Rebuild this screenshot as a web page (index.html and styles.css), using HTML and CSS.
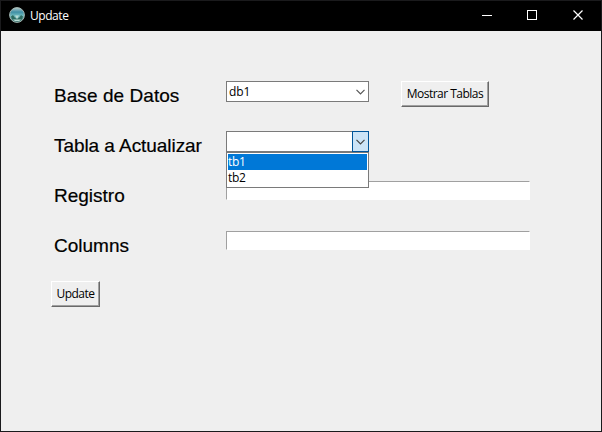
FILE: index.html
```html
<!DOCTYPE html>
<html lang="es">
<head>
<meta charset="utf-8">
<title>Update</title>
<link rel="stylesheet" href="styles.css">
</head>
<body>
<div class="window">
  <header class="titlebar">
    <svg class="logo" width="16" height="16" viewBox="0 0 16 16">
      <defs><linearGradient id="sky" x1="0" y1="0" x2="0" y2="1"><stop offset="0" stop-color="#b5c9c8"/><stop offset=".3" stop-color="#3f8fa5"/><stop offset=".55" stop-color="#6fb9bd"/><stop offset="1" stop-color="#2d6560"/></linearGradient></defs>
      <circle cx="8" cy="8" r="7.4" fill="url(#sky)" stroke="#a3b5b0" stroke-width="1"/>
      <path d="M2 9.500l2-1.500 2 3 2 1 2-1 2-3 2 1.500-1 2.500-2 1H5l-2-1z" fill="#2c6a5e"/>
      <path d="M6 8.500h4l-1 2-1 1.500-1-1.500zM4 12.500h8l-2 1.500H6z" fill="#b9ddd5"/>
    </svg>
    <span class="title">Update</span>
    <div class="controls">
      <svg width="46" height="30" viewBox="0 0 46 30"><path d="M19 14.500h10" stroke="#fff"/></svg>
      <svg width="46" height="30" viewBox="0 0 46 30"><rect x="18.500" y="9.500" width="9" height="9" fill="none" stroke="#fff"/></svg>
      <svg width="46" height="30" viewBox="0 0 46 30"><path d="M18.500 9.500l9 9m0-9l-9 9" stroke="#fff" stroke-width="1.200"/></svg>
    </div>
  </header>
  <main class="form">
    <div class="row">
      <label class="label base">Base de Datos</label>
      <div class="combo"><span class="value">db1</span><span class="arrow"><svg width="9" height="6" viewBox="0 0 9 6"><path d="M.5.800l4 4 4-4" fill="none" stroke="#555" stroke-width="1.200"/></svg></span></div>
      <button class="button show">Mostrar Tablas</button>
    </div>
    <div class="row">
      <label class="label tabla">Tabla a Actualizar</label>
      <div class="combo">
        <span class="value"></span><span class="arrow active"><svg width="9" height="6" viewBox="0 0 9 6"><path d="M.5.800l4 4 4-4" fill="none" stroke="#444" stroke-width="1.200"/></svg></span>
        <div class="menu"><div class="option selected">tb1</div><div class="option">tb2</div></div>
      </div>
    </div>
    <div class="row"><label class="label">Registro</label><div class="entry"></div></div>
    <div class="row"><label class="label">Columns</label><div class="entry"></div></div>
    <button class="button update">Update</button>
  </main>
</div>
</body>
</html>
```
FILE: styles.css
```css
* { box-sizing: border-box; }
body { margin: 0; font: 12px/16px "Open Sans", "Noto Sans", sans-serif; color: #000; }
.window { width: 602px; height: 432px; border: 1px solid #1a1a1c; background: #efefef; overflow: hidden; }
.titlebar { display: flex; height: 30px; background: #000; color: #fff; padding-left: 8px; }
.logo { margin-top: 6px; }
.title { margin: 7px 0 0 5px; letter-spacing: -.45px; }
.controls { display: flex; margin-left: auto; }
.controls svg { display: block; }
.form { padding: 50px 0 0 50px; }
.row { display: flex; align-items: flex-start; height: 50px; }
.label { width: 175px; padding: 4px 0 0 3px; font: 19px/22px "Liberation Sans", Arial, sans-serif; white-space: nowrap; -webkit-text-stroke: .2px #000; }
.base { letter-spacing: .06px; }
.tabla { letter-spacing: -.06px; }
.combo { position: relative; display: flex; width: 143px; height: 21px; border: 1px solid #7a7a7a; background: #fff; }
.value { flex: 1; padding: 2px 0 0 2px; letter-spacing: -.1px; }
.arrow { display: flex; align-items: center; justify-content: center; width: 17px; margin: -1px; height: 21px; }
.arrow.active { background: #cce4f7; border: 1px solid #005499; }
.menu { position: absolute; z-index: 1; left: -1px; top: 20px; width: 143px; height: 36px; padding: 1px 1px 0; border: 1px solid #7a7a7a; background: #fff; }
.option { height: 16px; line-height: 16px; letter-spacing: -.3px; }
.option.selected { background: #0078d7; color: #fff; }
.entry { width: 304px; height: 19px; border: 1px solid #fff; border-top-color: #a0a0a0; border-left-color: #a0a0a0; background: #fff; }
.button { display: flex; align-items: center; justify-content: center; height: 26px; padding: 0; border: 1px solid; border-color: #fff #696969 #696969 #fff; background: #efefef; color: #000; font: inherit; white-space: nowrap; box-shadow: inset -1px -1px #a0a0a0; }
.show { width: 88px; margin-left: 32px; letter-spacing: -.52px; }
.update { width: 49px; letter-spacing: -.5px; }
```
